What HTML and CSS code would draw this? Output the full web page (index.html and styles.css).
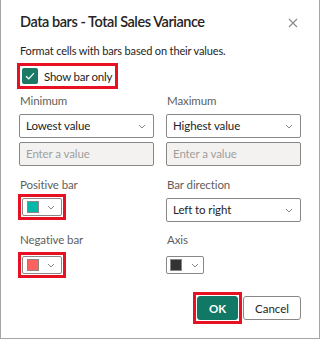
FILE: index.html
```html
<!DOCTYPE html>
<html lang="en">

<head>
    <meta charset="UTF-8">
    <meta name="viewport" content="width=device-width, initial-scale=1.0">
    <title>Data bars</title>
    <link rel="stylesheet" href="styles.css">
</head>

<body>
    <div class="dialog">
        <div class="header">
            <h1 class="title">Data bars - Total Sales Variance</h1>
            <svg class="close" width="10" height="10" viewBox="0 0 10 10">
                <path d="M1 1L9 9M9 1L1 9" stroke="#8a8886" stroke-width="1.1" fill="none" />
            </svg>
        </div>
        <p class="desc">Format cells with bars based on their values.</p>
        <label class="check mark">
            <span class="box">
                <svg width="10" height="8" viewBox="0 0 10 8">
                    <path d="M1 4.2L3.7 6.8L9 1.2" stroke="#fff" stroke-width="1.2" fill="none" />
                </svg>
            </span>
            Show bar only
        </label>

        <div class="grid">
            <div class="field">
                <div class="label">Minimum</div>
                <div class="select">Lowest value<svg class="chev" width="8" height="5" viewBox="0 0 8 5"><path d="M1 1L4 4L7 1" /></svg></div>
                <div class="input">Enter a value</div>
            </div>
            <div class="field">
                <div class="label">Maximum</div>
                <div class="select">Highest value<svg class="chev" width="8" height="5" viewBox="0 0 8 5"><path d="M1 1L4 4L7 1" /></svg></div>
                <div class="input">Enter a value</div>
            </div>

            <div class="field gap">
                <div class="label">Positive bar</div>
                <div class="picker mark"><span class="swatch" style="background:#01b8aa"></span><svg class="chev" width="8" height="5" viewBox="0 0 8 5"><path d="M1 1L4 4L7 1" /></svg></div>
            </div>
            <div class="field gap">
                <div class="label">Bar direction</div>
                <div class="select">Left to right<svg class="chev" width="8" height="5" viewBox="0 0 8 5"><path d="M1 1L4 4L7 1" /></svg></div>
            </div>

            <div class="field gap2">
                <div class="label">Negative bar</div>
                <div class="picker low mark"><span class="swatch" style="background:#fd625e"></span><svg class="chev" width="8" height="5" viewBox="0 0 8 5"><path d="M1 1L4 4L7 1" /></svg></div>
            </div>
            <div class="field gap2">
                <div class="label">Axis</div>
                <div class="picker low small"><span class="swatch" style="background:#333333"></span><svg class="chev" width="8" height="5" viewBox="0 0 8 5"><path d="M1 1L4 4L7 1" /></svg></div>
            </div>
        </div>

        <div class="footer">
            <button class="btn primary mark">OK</button>
            <button class="btn">Cancel</button>
        </div>
    </div>
</body>
</html>
```

FILE: styles.css
```css
* {
    box-sizing: border-box;
}

body {
    margin: 0;
    background: #fff;
    font-family: Lato, "Noto Sans", sans-serif;
    color: #252423;
}

.dialog {
    width: 320px;
    height: 339px;
    border: 1px solid #a6a6a6;
    border-top: none;
    padding: 12px 18px 0 18px;
}

.header {
    display: flex;
    justify-content: space-between;
    align-items: center;
    height: 20px;
}

.title {
    margin: 0 0 0 1px;
    font-size: 14.5px;
    font-weight: 600;
    line-height: 20px;
    letter-spacing: -0.45px;
}

.close {
    margin: 2px 3px 0 0;
}

.desc {
    margin: 11px 0 0 1px;
    font-size: 11px;
    line-height: 16px;
    letter-spacing: -0.15px;
}

.check {
    display: flex;
    width: fit-content;
    align-items: center;
    gap: 6px;
    margin: 9px 0 0 3px;
    height: 16px;
    padding-right: 1px;
    font-size: 11.5px;
    letter-spacing: -0.25px;
}

.check .box {
    width: 16px;
    height: 16px;
    border-radius: 2px;
    background: #1a7a66;
    display: flex;
    align-items: center;
    justify-content: center;
}

/* red annotation frames drawn over the controls */
.mark {
    position: relative;
}

.mark::after {
    content: "";
    position: absolute;
    inset: -5px;
    border: 3px solid #e81123;
    pointer-events: none;
}

.grid {
    display: grid;
    grid-template-columns: 135px 135px;
    column-gap: 12px;
    margin-top: 9px;
}

.field.gap {
    margin-top: 11px;
}

.field.gap2 {
    margin-top: 10px;
}

.label {
    margin-left: 1px;
    font-size: 11.5px;
    line-height: 16px;
    letter-spacing: -0.1px;
    color: #605e5c;
}

.select,
.input {
    height: 24px;
    border: 1px solid #8a8886;
    border-radius: 2px;
    padding: 0 7px 0 6px;
    font-size: 11.5px;
    letter-spacing: -0.1px;
    line-height: 22px;
    display: flex;
    justify-content: space-between;
    align-items: center;
}

.select {
    margin-top: 5px;
}

.input {
    margin-top: 4px;
    background: #f3f2f1;
    color: #a19f9d;
}

.chev {
    fill: none;
    stroke: #8a8886;
    stroke-width: 1;
}

.picker {
    width: 40px;
    height: 18px;
    margin: 5px 0 0 3px;
    border: 1px solid #8a8886;
    border-radius: 2px;
    padding: 0 6px 0 4px;
    display: flex;
    justify-content: space-between;
    align-items: center;
}

.picker.low {
    margin-top: 8px;
}

.picker.small {
    width: 38px;
    margin-left: 0;
    padding: 0 4px 0 3px;
}

.swatch {
    width: 12px;
    height: 12px;
    border: 1px solid #8a8886;
}

.footer {
    display: flex;
    justify-content: flex-end;
    gap: 5px;
    margin-top: 22px;
}

.btn {
    height: 24px;
    border: 1px solid #8a8886;
    border-radius: 3px;
    background: #fff;
    font-family: inherit;
    font-size: 11.5px;
    color: #252423;
    padding: 0;
    width: 58px;
}

.btn.primary {
    width: 41px;
    background: #117865;
    border-color: #117865;
    color: #fff;
    font-weight: 700;
}
```
